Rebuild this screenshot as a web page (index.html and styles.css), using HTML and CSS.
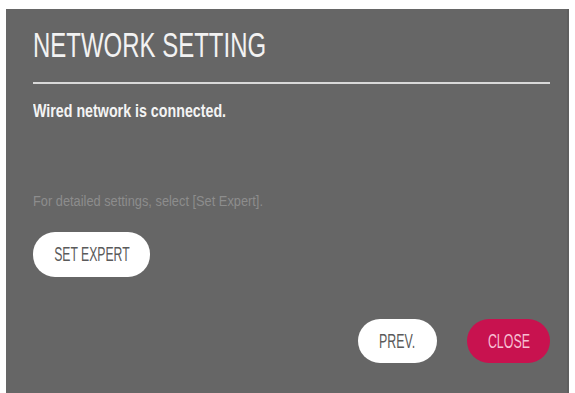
FILE: index.html
```html
<!DOCTYPE html>
<html>
<head>
<meta charset="utf-8">
<link rel="stylesheet" href="styles.css">
</head>
<body>
<div class="panel">
  <h1 class="title"><span class="cond">NETWORK SETTING</span></h1>
  <div class="rule"></div>
  <p class="status"><span class="cond">Wired network is connected.</span></p>
  <p class="hint"><span class="cond">For detailed settings, select [Set Expert].</span></p>
  <div class="expert-row">
    <button class="pill pill-light expert"><span class="cond-c">SET EXPERT</span></button>
  </div>
  <div class="footer">
    <button class="pill pill-light prev"><span class="cond-c">PREV.</span></button>
    <button class="pill pill-red close"><span class="cond-c">CLOSE</span></button>
  </div>
</div>
</body>
</html>
```
FILE: styles.css
```css
html, body {
  margin: 0;
  padding: 0;
  background: #ffffff;
  width: 575px;
  height: 393px;
  overflow: hidden;
  font-family: "Liberation Sans", Arial, sans-serif;
}
.panel {
  box-sizing: border-box;
  margin: 9px 0 0 6px;
  width: 563px;
  height: 384px;
  background: #666666;
  border-right: 2px solid #5f5f5f;
  padding: 18px 17px 30px 27px;
  display: flex;
  flex-direction: column;
}
.cond {
  display: inline-block;
  transform-origin: left center;
  white-space: nowrap;
}
.cond-c {
  display: inline-block;
  transform-origin: center center;
  white-space: nowrap;
}
.title {
  margin: 0;
  font-size: 35px;
  line-height: 35px;
  font-weight: normal;
  color: #f2f2f2;
  height: 35px;
}
.title .cond { transform: scaleX(0.685); }
.rule {
  margin-top: 20px;
  height: 2px;
  background: #d9d9d9;
}
.status {
  margin: 17px 0 0 0;
  font-size: 19px;
  line-height: 19px;
  font-weight: bold;
  color: #f4f4f4;
  height: 19px;
}
.status .cond { transform: scaleX(0.75); }
.hint {
  margin: 74px 0 0 0;
  font-size: 14px;
  line-height: 14px;
  color: #8d8d8d;
  height: 14px;
}
.hint .cond { transform: scaleX(0.915); }
.expert-row {
  margin-top: 24px;
  display: flex;
}
.pill {
  border: none;
  border-radius: 22px;
  height: 44px;
  padding: 0;
  font-family: "Liberation Sans", Arial, sans-serif;
  font-size: 20px;
  display: flex;
  align-items: center;
  justify-content: center;
}
.pill-light {
  background: #ffffff;
  color: #5a5a5a;
}
.pill-red {
  background: #c8124f;
  color: #f7bfd2;
}
.expert {
  width: 117px;
  height: 45px;
}
.expert .cond-c { transform: scaleX(0.61); }
.footer {
  margin-top: auto;
  display: flex;
  justify-content: flex-end;
  gap: 30px;
}
.prev { width: 79px; }
.prev .cond-c { transform: scaleX(0.62); }
.close { width: 83px; }
.close .cond-c { transform: scaleX(0.62); }
```
